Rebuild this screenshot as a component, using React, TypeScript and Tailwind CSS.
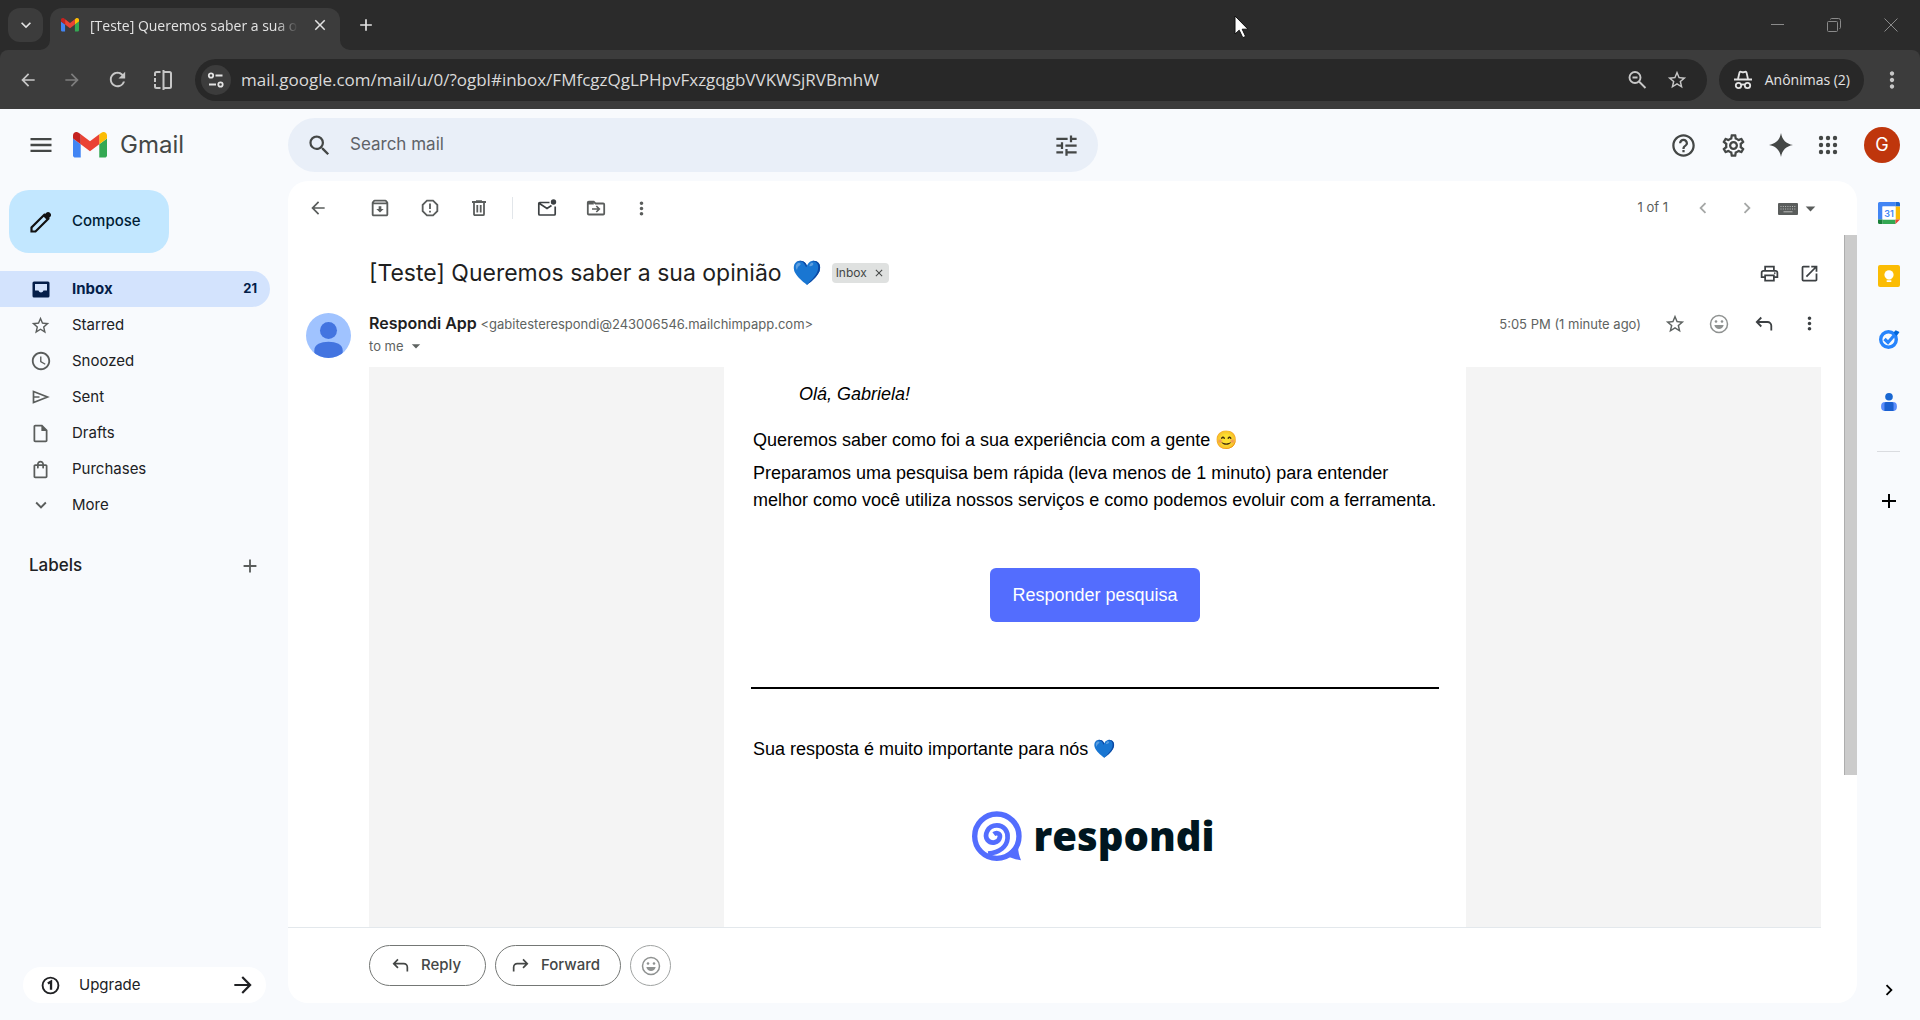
import type { ReactNode } from "react";
import {
  MdAccessTime,
  MdAdd,
  MdArrowBack,
  MdArrowDropDown,
  MdArrowForward,
  MdChevronLeft,
  MdChevronRight,
  MdClose,
  MdExpandMore,
  MdHelpOutline,
  MdMenu,
  MdMoreVert,
  MdOpenInNew,
  MdOutlineArchive,
  MdOutlineInsertDriveFile,
  MdOutlinePrint,
  MdOutlineSettings,
  MdOutlineShoppingBag,
  MdRefresh,
  MdReportGmailerrorred,
  MdSearch,
  MdStarBorder,
  MdTune,
} from "react-icons/md";

type IconProps = { className?: string };

function GmailLogo({ className }: IconProps) {
  return (
    <svg viewBox="52 42 88 66" className={className} aria-hidden="true">
      <path fill="#4285f4" d="M58 108h14V74L52 59v43c0 3.32 2.69 6 6 6" />
      <path fill="#34a853" d="M120 108h14c3.32 0 6-2.69 6-6V59l-20 15" />
      <path fill="#fbbc04" d="M120 48v26l20-15v-8c0-7.42-8.47-11.65-14.4-7.2" />
      <path fill="#ea4335" d="M72 74V48l24 18 24-18v26L96 92" />
      <path fill="#c5221f" d="M52 51v8l20 15V48l-5.6-4.2c-5.94-4.45-14.4-.22-14.4 7.2" />
    </svg>
  );
}

function SplitViewIcon({ className }: IconProps) {
  return (
    <svg viewBox="0 0 20 22" className={className} fill="none" stroke="currentColor" strokeWidth="2" aria-hidden="true">
      <path d="M7.5 3H3.5A1.5 1.5 0 0 0 2 4.500V7M2 9v4M2 15v2.500A1.500 1.500 0 0 0 3.500 19H7.500M10.500 1v20M10.500 3h6A1.500 1.500 0 0 1 18 4.500v13a1.500 1.500 0 0 1-1.500 1.500h-6" />
    </svg>
  );
}

function SiteInfoIcon({ className }: IconProps) {
  return (
    <svg viewBox="0 0 18 16" className={className} fill="none" stroke="currentColor" strokeWidth="1.8" aria-hidden="true">
      <circle cx="4" cy="3.500" r="2.200" />
      <path d="M8.500 3.500h7M2 12.500h7" />
      <circle cx="13.500" cy="12.500" r="2.200" />
    </svg>
  );
}

function ZoomOutIcon({ className }: IconProps) {
  return (
    <svg viewBox="0 0 20 20" className={className} fill="none" stroke="currentColor" strokeWidth="1.9" aria-hidden="true">
      <circle cx="8" cy="7.500" r="5.500" />
      <path d="M5.500 7.500h5M12 11.500l6.500 6.500" />
    </svg>
  );
}

function IncognitoIcon({ className }: IconProps) {
  return (
    <svg viewBox="0 0 20 20" className={className} fill="none" stroke="currentColor" strokeWidth="1.8" aria-hidden="true">
      <path d="M5 9l1.500-6.500c.2-.7.8-.9 1.500-.7l1 .3c.7.2 1.300.2 2 0l1-.3c.7-.2 1.300 0 1.500.7L15 9" />
      <path d="M1 9.500h18" strokeWidth="2" />
      <circle cx="5.500" cy="15.500" r="2.700" />
      <circle cx="14.500" cy="15.500" r="2.700" />
      <path d="M8 15c1.200-.8 2.800-.8 4 0" />
    </svg>
  );
}

function PencilIcon({ className }: IconProps) {
  return (
    <svg viewBox="0 0 22 22" className={className} fill="none" aria-hidden="true">
      <path d="M1.500 16.500v4h4L18.300 7.700l-4-4z" stroke="#111" strokeWidth="2.200" />
      <path d="M13 5l3.300-3.300c1-1 2.600-1 3.600.1l.4.400c1 1 1 2.500 0 3.500L17 9z" fill="#111" />
    </svg>
  );
}

function SparkIcon({ className }: IconProps) {
  return (
    <svg viewBox="0 0 24 24" className={className} fill="currentColor" aria-hidden="true">
      <path d="M12 0C13.300 7 17 10.700 24 12 17 13.300 13.300 17 12 24 10.700 17 7 13.300 0 12 7 10.700 10.700 7 12 0z" />
    </svg>
  );
}

function DotsGridIcon({ className }: IconProps) {
  return (
    <svg viewBox="0 0 20 20" className={className} fill="currentColor" aria-hidden="true">
      {[3, 10, 17].map((y) => [3, 10, 17].map((x) => <circle key={`${x}-${y}`} cx={x} cy={y} r="2.200" />))}
    </svg>
  );
}

function InboxIcon({ className }: IconProps) {
  return (
    <svg viewBox="0 0 18 17" className={className} aria-hidden="true">
      <path
        fillRule="evenodd"
        fill="currentColor"
        d="M2 .5h14a1.500 1.500 0 0 1 1.500 1.500v13a1.500 1.500 0 0 1-1.500 1.500H2A1.500 1.500 0 0 1 .5 15V2A1.500 1.500 0 0 1 2 .5zM3 3v6.500h3.500c.4 1.200 1.400 2 2.500 2s2.100-.8 2.500-2H15V3z"
      />
    </svg>
  );
}

function SendIcon({ className }: IconProps) {
  return (
    <svg viewBox="0 0 18 14" className={className} fill="none" stroke="currentColor" strokeWidth="1.700" aria-hidden="true">
      <path d="M1.500 1.500L15.500 7l-14 5.500zM1.500 7h6" />
    </svg>
  );
}

function TrashIcon({ className }: IconProps) {
  return (
    <svg viewBox="0 0 18 18" className={className} fill="none" stroke="currentColor" strokeWidth="1.800" aria-hidden="true">
      <path d="M2 3h14M6 2.200h6M4 3v12.200a1 1 0 0 0 1 1h8a1 1 0 0 0 1-1V3M7.300 6v7.500M10.700 6v7.500" />
    </svg>
  );
}

function KeyboardIcon({ className }: IconProps) {
  return (
    <svg viewBox="0 0 20 12" className={className} aria-hidden="true">
      <rect width="20" height="12" rx="1" fill="currentColor" />
      <path d="M2.500 3.500h15M2.500 6h15" stroke="#b9bbba" strokeDasharray="1 1.300" />
      <path d="M5.500 8.800h9" stroke="#b9bbba" />
    </svg>
  );
}

function MailUnreadIcon({ className }: IconProps) {
  return (
    <svg viewBox="0 0 20 20" className={className} fill="none" stroke="currentColor" strokeWidth="1.700" aria-hidden="true">
      <path d="M12.500 4.500H2.800a1 1 0 0 0-1 1v10.500a1 1 0 0 0 1 1h14.400a1 1 0 0 0 1-1V8.500M2.500 5.500L10 10.500l4.500-3" />
      <circle cx="16.500" cy="4" r="2.700" fill="currentColor" stroke="none" />
    </svg>
  );
}

function MoveToIcon({ className }: IconProps) {
  return (
    <svg viewBox="0 0 20 20" className={className} fill="none" stroke="currentColor" strokeWidth="1.800" aria-hidden="true">
      <path d="M1.800 5v10.500a1 1 0 0 0 1 1h14.400a1 1 0 0 0 1-1V6.500a1 1 0 0 0-1-1H9.500L7.700 3.700H2.800a1 1 0 0 0-1 1z" />
      <path d="M1.800 4h6v2.500h-6z" fill="currentColor" stroke="none" />
      <path d="M6 11h7M10.300 8l3 3-3 3" strokeWidth="1.700" />
    </svg>
  );
}

function ReplyIcon({ className }: IconProps) {
  return (
    <svg viewBox="0 0 18 16" className={className} fill="none" stroke="currentColor" strokeWidth="1.800" aria-hidden="true">
      <path d="M6.300 1.500L1.800 6l4.500 4.500M2 6h10.500a3.800 3.800 0 0 1 3.800 3.800V14.500" />
    </svg>
  );
}

function SmileIcon({ className }: IconProps) {
  return (
    <svg viewBox="0 0 20 20" className={className} aria-hidden="true">
      <circle cx="10" cy="10" r="8.500" fill="none" stroke="currentColor" strokeWidth="1.500" />
      <circle cx="7" cy="7.500" r="1.300" fill="currentColor" />
      <circle cx="13" cy="7.500" r="1.300" fill="currentColor" />
      <path d="M5.300 11h9.400c-.6 2.600-2.500 4-4.700 4s-4.100-1.400-4.700-4z" fill="currentColor" />
    </svg>
  );
}

function CoinIcon({ className }: IconProps) {
  return (
    <svg viewBox="0 0 18 18" className={className} fill="none" stroke="currentColor" aria-hidden="true">
      <circle cx="9" cy="9" r="7.500" strokeWidth="1.800" />
      <path d="M6.500 7.200L9.500 5.300V13" strokeWidth="2.200" />
    </svg>
  );
}

function CalendarIcon({ className }: IconProps) {
  return (
    <svg viewBox="0 0 22 22" className={className} aria-hidden="true">
      <path fill="#4285f4" d="M1.500 0H17.500V4.500H4.500V17.500H0V1.500A1.500 1.500 0 0 1 1.500 0z" />
      <path fill="#1967d2" d="M17.500 0h3A1.500 1.500 0 0 1 22 1.500V4.500H17.500z" />
      <path fill="#fbbc04" d="M17.500 4.500H22V17.500H17.500z" />
      <path fill="#34a853" d="M4.500 17.500H17.500V22H4.500z" />
      <path fill="#188038" d="M0 17.500H4.500V22H1.500A1.500 1.500 0 0 1 0 20.500z" />
      <path fill="#ea4335" d="M17.500 17.500H22L17.500 22z" />
      <path fill="#fff" d="M4.500 4.500h13v13h-13z" />
      <text x="11" y="14.500" textAnchor="middle" fontSize="9" fontWeight="600" fill="#4285f4" fontFamily="Inter, sans-serif">
        31
      </text>
    </svg>
  );
}

function KeepIcon({ className }: IconProps) {
  return (
    <svg viewBox="0 0 22 22" className={className} aria-hidden="true">
      <rect width="22" height="22" rx="2" fill="#fbbc04" />
      <circle cx="11" cy="9.800" r="4.600" fill="#fff" />
      <path d="M8.700 12h4.600v2.300H8.700zM8.700 15.300h4.600v1.700H8.700z" fill="#fff" />
    </svg>
  );
}

function TasksIcon({ className }: IconProps) {
  return (
    <svg viewBox="0 0 22 22" className={className} fill="none" aria-hidden="true">
      <circle cx="10.500" cy="11.500" r="7.800" stroke="#2684fc" strokeWidth="3.400" />
      <path d="M6.500 11l3.500 3.500L16.500 7" stroke="#2684fc" strokeWidth="3.200" />
      <path d="M15.500 4.500l2.200-2.200 3.800 1.800-2.800 4z" fill="#0066da" />
    </svg>
  );
}

function ContactsIcon({ className }: IconProps) {
  return (
    <svg viewBox="0 0 22 22" className={className} aria-hidden="true">
      <circle cx="11" cy="5.200" r="4.200" fill="#1967d2" />
      <rect x="2.300" y="11" width="17.400" height="10" rx="4.500" fill="#5b8dfb" />
      <path d="M8 11h6.500a2 2 0 0 1 1.500 2v8H6v-8a2 2 0 0 1 2-2z" fill="#1a5fd0" />
    </svg>
  );
}

function RespondiMark({ className }: IconProps) {
  return (
    <svg viewBox="38 35 149 149" className={className} fill="none" stroke="#536dfe" aria-hidden="true">
      <circle cx="112" cy="110" r="66" strokeWidth="16" />
      <path d="M103 104C112 97 123 103 121 113C118 131 95 134 84 121C74 107 84 78 112 78C134 78 146 96 144 116C142 141 120 158 86 162" strokeWidth="14" />
      <path d="M176 132C174 150 177 164 184 182C168 180 160 176 148 172L130 178L146 158z" fill="#536dfe" stroke="none" />
    </svg>
  );
}

function PersonAvatar({ className }: IconProps) {
  return (
    <svg viewBox="0 0 45 45" className={className} aria-hidden="true">
      <defs>
        <clipPath id="avatar-clip">
          <circle cx="22.500" cy="22.500" r="22.500" />
        </clipPath>
      </defs>
      <g clipPath="url(#avatar-clip)">
        <rect width="45" height="45" fill="#a0c3ff" />
        <circle cx="22.500" cy="17.500" r="8.500" fill="#4374e0" />
        <path d="M8.300 37.500c0-6 6.500-8.700 14.200-8.700s14.200 2.700 14.200 8.700V45H8.300z" fill="#4374e0" />
      </g>
    </svg>
  );
}

function IconButton({ label, className = "", children }: { label: string; className?: string; children: ReactNode }) {
  return (
    <button type="button" aria-label={label} className={`flex shrink-0 items-center justify-center ${className}`}>
      {children}
    </button>
  );
}

function TabStrip() {
  return (
    <div className="relative flex h-[50px] items-end bg-[#2b2b2b] pl-2 text-[#e3e3e3]">
      <IconButton label="Search tabs" className="mb-2 h-[34px] w-[35px] rounded-xl bg-[#3c3c3c]">
        <MdExpandMore className="size-5" />
      </IconButton>
      <div className="relative ml-[7px] flex h-[42px] w-[290px] items-center rounded-t-xl bg-[#3c3c3c] pr-2.5 pl-[11px]">
        <svg viewBox="0 0 10 10" className="absolute bottom-0 -left-2.5 size-2.5" aria-hidden="true">
          <path d="M10 0v10H0A10 10 0 0 0 10 0z" fill="#3c3c3c" />
        </svg>
        <svg viewBox="0 0 10 10" className="absolute -right-2.5 bottom-0 size-2.5" aria-hidden="true">
          <path d="M0 0v10h10A10 10 0 0 1 0 0z" fill="#3c3c3c" />
        </svg>
        <GmailLogo className="mb-2 w-[18px]" />
        <span className="mb-1.5 ml-[11px] w-[208px] overflow-hidden font-['Open_Sans',sans-serif] text-sm whitespace-nowrap [mask-image:linear-gradient(to_right,black_186px,transparent_208px)]">
          [Teste] Queremos saber a sua opinião
        </span>
        <IconButton label="Close tab" className="mb-2 ml-auto size-5">
          <MdClose className="size-[18px]" />
        </IconButton>
      </div>
      <IconButton label="New tab" className="mb-[15px] ml-4 size-5">
        <MdAdd className="size-[22px]" />
      </IconButton>
      <div className="ml-auto flex h-[50px] items-center text-[#8a8a8a]">
        <IconButton label="Minimize" className="h-full w-14">
          <svg viewBox="0 0 14 14" className="size-3.5" stroke="currentColor" aria-hidden="true">
            <path d="M0 6.500h13" />
          </svg>
        </IconButton>
        <IconButton label="Restore" className="h-full w-14">
          <svg viewBox="0 0 14 14" className="size-3.5" fill="none" stroke="currentColor" aria-hidden="true">
            <path d="M.5 4.500a1 1 0 0 1 1-1h8a1 1 0 0 1 1 1v8a1 1 0 0 1-1 1h-8a1 1 0 0 1-1-1zM3.500 1.500a1 1 0 0 1 1-1h7a2 2 0 0 1 2 2v7a1 1 0 0 1-1 1" />
          </svg>
        </IconButton>
        <IconButton label="Close window" className="h-full w-[58px]">
          <svg viewBox="0 0 14 14" className="size-3.5" stroke="currentColor" aria-hidden="true">
            <path d="M.5.5l13 13M13.500.5l-13 13" />
          </svg>
        </IconButton>
      </div>
      <svg viewBox="0 0 15 24" className="absolute top-[15px] left-[1234px] h-6 w-[15px]" aria-hidden="true">
        <path d="M1 1v18l4.200-3.800 3.600 7.500 2.800-1.300-3.400-7.200H14z" fill="#fff" stroke="#111" strokeWidth="1" />
      </svg>
    </div>
  );
}

function BrowserToolbar() {
  return (
    <div className="bg-[#2b2b2b]">
      <div className="flex h-[59px] items-center rounded-t-lg bg-[#3c3c3c] pr-3 text-[#c7c7c7]">
        <IconButton label="Back" className="ml-2 size-10">
          <MdArrowBack className="size-5" />
        </IconButton>
        <IconButton label="Forward" className="ml-1 size-10 text-[#7d7d7d]">
          <MdArrowBack className="size-5 rotate-180" />
        </IconButton>
        <IconButton label="Reload" className="ml-[5px] size-10">
          <MdRefresh className="size-[23px]" />
        </IconButton>
        <IconButton label="Split view" className="ml-1 size-11">
          <SplitViewIcon className="h-[22px] w-5" />
        </IconButton>
        <div className="ml-2.5 flex h-[42px] flex-1 items-center rounded-full bg-[#282828] pr-[18px] pl-1.5">
          <IconButton label="Site information" className="size-[30px] rounded-full bg-[#3c3c3c] text-[#e3e3e3]">
            <SiteInfoIcon className="h-4 w-[18px]" />
          </IconButton>
          <input
            aria-label="Address"
            className="ml-2.5 min-w-0 flex-1 bg-transparent font-['Open_Sans',sans-serif] text-[17px] text-[#dadada] outline-none"
            defaultValue="mail.google.com/mail/u/0/?ogbl#inbox/FMfcgzQgLPHpvFxzgqgbVVKWSjRVBmhW"
          />
          <IconButton label="Zoom" className="size-6">
            <ZoomOutIcon className="size-5" />
          </IconButton>
          <IconButton label="Bookmark" className="ml-4 size-6">
            <MdStarBorder className="size-[22px]" />
          </IconButton>
        </div>
        <button
          type="button"
          className="ml-3 flex h-[42px] items-center gap-3 rounded-full bg-[#282828] px-3.5 font-['Open_Sans',sans-serif] text-sm text-[#e3e3e3]"
        >
          <IncognitoIcon className="size-5" />
          Anônimas (2)
        </button>
        <IconButton label="Browser menu" className="ml-3 size-8">
          <MdMoreVert className="size-[26px]" />
        </IconButton>
      </div>
    </div>
  );
}

function MailHeader() {
  return (
    <header className="flex h-[72px] items-center text-[#444746]">
      <div className="flex w-[288px] shrink-0 items-center pl-[27px]">
        <IconButton label="Main menu" className="size-7">
          <MdMenu className="size-7" />
        </IconButton>
        <a href="#inbox" className="ml-[18px] flex items-center gap-[13px] text-2xl">
          <GmailLogo className="w-[34px]" />
          Gmail
        </a>
      </div>
      <label className="flex h-[54px] w-full max-w-[810px] items-center rounded-full bg-[#e9eff8] px-[18px]">
        <MdSearch className="size-[27px] shrink-0" />
        <input
          type="search"
          aria-label="Search mail"
          placeholder="Search mail"
          className="ml-[17px] min-w-0 flex-1 bg-transparent text-[17px] outline-none placeholder:text-[#5f6368]"
        />
        <IconButton label="Search options" className="size-7">
          <MdTune className="size-[27px]" />
        </IconButton>
      </label>
      <div className="ml-auto flex items-center pr-5">
        <IconButton label="Support" className="w-[50px]">
          <MdHelpOutline className="size-[27px]" />
        </IconButton>
        <IconButton label="Settings" className="w-[50px]">
          <MdOutlineSettings className="size-[27px]" />
        </IconButton>
        <IconButton label="Gemini" className="w-[46px]">
          <SparkIcon className="size-6" />
        </IconButton>
        <IconButton label="Google apps" className="w-12">
          <DotsGridIcon className="size-5" />
        </IconButton>
        <button
          type="button"
          aria-label="Google Account"
          className="ml-3 size-9 rounded-full bg-[#bf360c] text-lg text-white"
        >
          G
        </button>
      </div>
    </header>
  );
}

const folders: { name: string; icon: ReactNode; count?: number }[] = [
  { name: "Inbox", icon: <InboxIcon className="h-[17px] w-[18px] text-[#041e49]" />, count: 21 },
  { name: "Starred", icon: <MdStarBorder className="size-[21px]" /> },
  { name: "Snoozed", icon: <MdAccessTime className="size-[22px]" /> },
  { name: "Sent", icon: <SendIcon className="h-3.5 w-[18px]" /> },
  { name: "Drafts", icon: <MdOutlineInsertDriveFile className="size-[21px]" /> },
  { name: "Purchases", icon: <MdOutlineShoppingBag className="size-[21px]" /> },
  { name: "More", icon: <MdExpandMore className="size-[22px]" /> },
];

function Sidebar() {
  return (
    <aside className="flex w-[288px] shrink-0 flex-col">
      <button
        type="button"
        className="mt-[9px] ml-[9px] flex h-[63px] w-40 items-center gap-5 rounded-[20px] bg-[#c2e7ff] pl-[21px] text-[15px] font-medium text-[#001d35]"
      >
        <PencilIcon className="size-[22px]" />
        Compose
      </button>
      <nav aria-label="Folders" className="mt-[18px] mr-[18px] text-[15px] text-[#202124]">
        {folders.map(({ name, icon, count }) => (
          <a
            key={name}
            href={`#${name.toLowerCase()}`}
            className={
              count
                ? "flex h-9 items-center rounded-r-full bg-[#d3e3fd] pr-[13px] pl-[29px] font-bold text-[#041e49]"
                : "flex h-9 items-center pr-[13px] pl-[29px]"
            }
          >
            <span className="flex w-[23px] shrink-0 justify-center text-[#5a5d5c]">{icon}</span>
            <span className="ml-5">{name}</span>
            {count && <span className="ml-auto text-[13px]">{count}</span>}
          </a>
        ))}
      </nav>
      <div className="mt-[25px] flex h-9 items-center justify-between pr-[27px] pl-[29px]">
        <h2 className="text-[17px] font-medium text-[#202124]">Labels</h2>
        <IconButton label="Create new label" className="size-[22px] text-[#5a5d5c]">
          <MdAdd className="size-[22px]" />
        </IconButton>
      </div>
      <button
        type="button"
        className="mt-auto mr-[22px] mb-[17px] ml-[23px] flex h-9 items-center rounded-full bg-white pr-2.5 pl-[18px] text-[15px] text-[#202124]"
      >
        <CoinIcon className="size-[19px]" />
        <span className="ml-[19px]">Upgrade</span>
        <MdArrowForward className="ml-auto size-[26px]" />
      </button>
    </aside>
  );
}

function MessageToolbar() {
  return (
    <div className="flex h-[54px] shrink-0 items-center pr-[35px] pl-[18px] text-[#5a5d5c]">
      <IconButton label="Back to Inbox" className="mr-8 size-6">
        <MdArrowBack className="size-5" />
      </IconButton>
      <IconButton label="Archive" className="w-9">
        <MdOutlineArchive className="size-[22px]" />
      </IconButton>
      <IconButton label="Report spam" className="ml-3.5 w-9">
        <MdReportGmailerrorred className="size-[22px]" />
      </IconButton>
      <IconButton label="Delete" className="ml-[13px] w-9">
        <TrashIcon className="size-[18px]" />
      </IconButton>
      <span className="ml-[15px] h-[22px] w-px bg-[#e2e6ea]" />
      <IconButton label="Mark as unread" className="ml-4 w-9 text-[#3c4043]">
        <MailUnreadIcon className="size-5" />
      </IconButton>
      <IconButton label="Move to" className="ml-[13px] w-9">
        <MoveToIcon className="size-5" />
      </IconButton>
      <IconButton label="More options" className="ml-[9px] w-9">
        <MdMoreVert className="size-[21px]" />
      </IconButton>
      <span className="ml-auto text-[13px]">1 of 1</span>
      <IconButton label="Newer" className="ml-4 w-[38px] text-[#a5a7a6]">
        <MdChevronLeft className="size-[22px]" />
      </IconButton>
      <IconButton label="Older" className="ml-1.5 w-[38px] text-[#a5a7a6]">
        <MdChevronRight className="size-[22px]" />
      </IconButton>
      <button type="button" aria-label="Input tools" className="ml-3 flex items-center gap-px">
        <KeyboardIcon className="mt-0.5 h-3 w-5" />
        <MdArrowDropDown className="size-[23px]" />
      </button>
    </div>
  );
}

function Subject() {
  return (
    <div className="mt-5 flex h-9 items-center text-[#3c4043]">
      <h1 className="flex items-center gap-2.5 text-[23px] text-[#1f1f1f]">
        [Teste] Queremos saber a sua opinião <span className="text-2xl">💙</span>
      </h1>
      <span className="ml-2.5 flex h-5 items-center gap-1.5 rounded bg-[#dfe1e0] px-1 text-xs text-[#444746]">
        Inbox
        <button type="button" aria-label="Remove label Inbox">
          <MdClose className="size-3" />
        </button>
      </span>
      <IconButton label="Print all" className="ml-auto w-10">
        <MdOutlinePrint className="size-[21px]" />
      </IconButton>
      <IconButton label="Open in new window" className="-mr-2 w-10">
        <MdOpenInNew className="size-[21px]" />
      </IconButton>
    </div>
  );
}

function Sender() {
  return (
    <div className="mt-[21px] -ml-[63px] flex items-start">
      <PersonAvatar className="mt-px size-[45px] shrink-0" />
      <div className="ml-[18px] flex-1 text-[13px] leading-[22px] text-[#5e6361]">
        <div className="flex items-center">
          <p>
            <span className="text-base leading-[22px] font-semibold text-[#1f1f1f]">Respondi App</span>{" "}
            &lt;gabitesterespondi@243006546.mailchimpapp.com&gt;
          </p>
          <time className="mr-3 ml-auto">5:05 PM (1 minute ago)</time>
          <IconButton label="Star" className="w-11">
            <MdStarBorder className="size-[22px]" />
          </IconButton>
          <IconButton label="Add reaction" className="w-11 text-[#8f9291]">
            <SmileIcon className="size-5" />
          </IconButton>
          <IconButton label="Reply" className="w-[46px] text-[#3c4043]">
            <ReplyIcon className="h-4 w-[18px]" />
          </IconButton>
          <IconButton label="More" className="-mr-2.5 w-11 text-[#3c4043]">
            <MdMoreVert className="size-[21px]" />
          </IconButton>
        </div>
        <button type="button" className="flex items-center gap-0.5">
          to me
          <MdArrowDropDown className="size-5" />
        </button>
      </div>
    </div>
  );
}

function EmailBody() {
  return (
    <div className="mt-[9px] flex-1 bg-[#f4f4f4]">
      <div className="mx-auto flex h-full w-full max-w-[742px] flex-col bg-white px-[27px] pt-[14px] font-['Liberation_Sans',Arial,sans-serif] text-lg leading-[27px] text-black">
        <p className="ml-12 italic">Olá, Gabriela!</p>
        <p className="mt-[19px] pl-0.5">Queremos saber como foi a sua experiência com a gente 😊</p>
        <p className="mt-1.5 pl-0.5">
          Preparamos uma pesquisa bem rápida (leva menos de 1 minuto) para entender melhor como você utiliza nossos serviços
          e como podemos evoluir com a ferramenta.
        </p>
        <a
          href="#responder"
          className="mt-[54px] flex h-[54px] w-[210px] items-center justify-center self-center rounded-md bg-[#536dfe] text-white"
        >
          Responder pesquisa
        </a>
        <hr className="mt-[65px] border-t-2 border-black" />
        <p className="mt-[47px] pl-0.5">Sua resposta é muito importante para nós 💙</p>
        <div className="mt-12 mr-1 flex items-center gap-3 self-center">
          <RespondiMark className="size-[50px]" />
          <span className="font-['Open_Sans',sans-serif] text-[40px] leading-[50px] font-extrabold text-[#001620]">respondi</span>
        </div>
      </div>
    </div>
  );
}

function Message() {
  return (
    <main className="flex min-w-0 flex-1 flex-col overflow-hidden rounded-[20px] bg-white">
      <MessageToolbar />
      <div className="flex flex-1">
        <div className="flex min-w-0 flex-1 flex-col">
          <div className="flex flex-1 flex-col pl-[81px]">
            <Subject />
            <Sender />
            <EmailBody />
          </div>
          <div className="flex h-[76px] items-center gap-[9px] border-t border-[#e3e8ec] pl-[81px] text-[15px] font-medium text-[#444746]">
            <button type="button" className="flex h-[41px] w-[117px] items-center gap-3 rounded-full border border-[#747775] pl-[22px]">
              <ReplyIcon className="h-[15px] w-[17px]" />
              Reply
            </button>
            <button type="button" className="flex h-[41px] w-[126px] items-center gap-3 rounded-full border border-[#747775] pl-4">
              <ReplyIcon className="h-[15px] w-[17px] -scale-x-100" />
              Forward
            </button>
            <IconButton label="Add reaction" className="size-[41px] rounded-full border border-[#a0a3a2] text-[#8f9291]">
              <SmileIcon className="size-5" />
            </IconButton>
          </div>
        </div>
        <div className="ml-[23px] w-[13px]">
          <div className="h-[540px] border-l border-[#adadad] bg-[#cbcbcb]" />
        </div>
      </div>
    </main>
  );
}

function SideRail() {
  return (
    <aside aria-label="Side panel" className="flex w-[63px] shrink-0 flex-col items-center">
      <IconButton label="Calendar" className="size-[63px]">
        <CalendarIcon className="size-[22px]" />
      </IconButton>
      <IconButton label="Keep" className="size-[63px]">
        <KeepIcon className="size-[22px]" />
      </IconButton>
      <IconButton label="Tasks" className="size-[63px]">
        <TasksIcon className="size-[22px]" />
      </IconButton>
      <IconButton label="Contacts" className="size-[63px]">
        <ContactsIcon className="size-5" />
      </IconButton>
      <span className="mt-[18px] h-px w-[23px] bg-[#dadce0]" />
      <IconButton label="Get add-ons" className="mt-[37px] size-6 text-black">
        <MdAdd className="size-6" />
      </IconButton>
      <IconButton label="Hide side panel" className="mt-auto mb-[18px] size-6 text-black">
        <MdChevronRight className="size-[22px]" />
      </IconButton>
    </aside>
  );
}

export default function App() {
  return (
    <div className="flex min-h-screen flex-col bg-[#f8fafd] font-['Inter',sans-serif]">
      <TabStrip />
      <BrowserToolbar />
      <MailHeader />
      <div className="flex flex-1">
        <Sidebar />
        <div className="flex min-w-0 flex-1 pb-[17px]">
          <Message />
        </div>
        <SideRail />
      </div>
    </div>
  );
}
